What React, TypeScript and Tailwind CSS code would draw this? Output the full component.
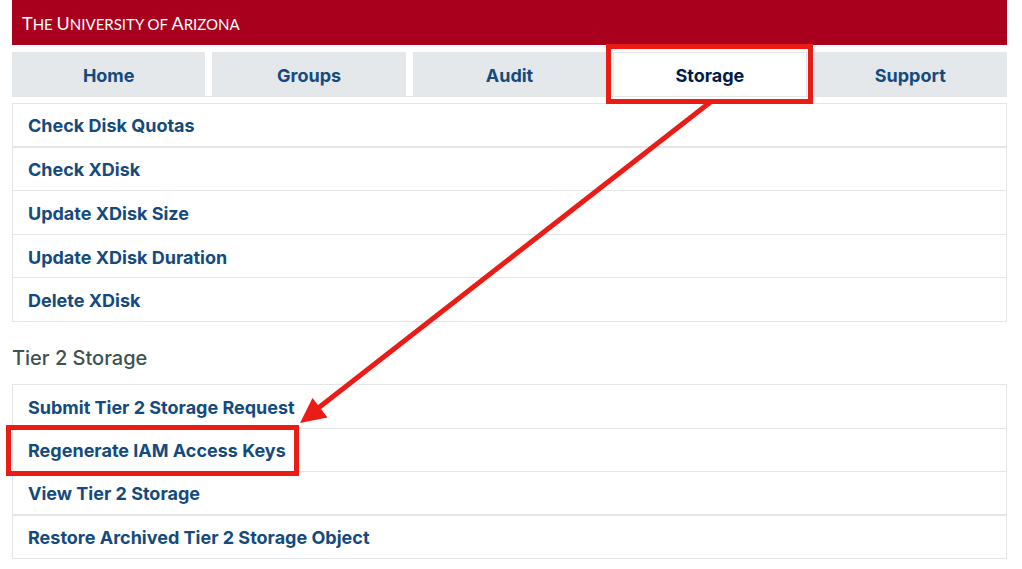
const tabs = ["Home", "Groups", "Audit", "Storage", "Support"];

const diskLinks = [
  "Check Disk Quotas",
  "Check XDisk",
  "Update XDisk Size",
  "Update XDisk Duration",
  "Delete XDisk",
];

const tierLinks = [
  "Submit Tier 2 Storage Request",
  "Regenerate IAM Access Keys",
  "View Tier 2 Storage",
  "Restore Archived Tier 2 Storage Object",
];

function Wordmark() {
  return (
    <a
      href="#home"
      className="font-['Lato',sans-serif] text-[15px] leading-5 font-normal text-white uppercase"
    >
      <span className="text-lg">T</span>he <span className="text-lg">U</span>niversity of{" "}
      <span className="text-lg">A</span>rizona
    </a>
  );
}

function LinkList({
  items,
  highlighted,
  className,
}: {
  items: string[];
  highlighted?: string;
  className: string;
}) {
  return (
    <ul className={`grid auto-rows-fr border-x border-b border-[#e2e6e9] ${className}`}>
      {items.map((item) => (
        <li key={item} className="flex items-center border-t border-[#e2e6e9] px-[15px] pt-0.5">
          <a href="#storage" className="relative">
            {item}
            {item === highlighted && (
              <span className="absolute -inset-y-3 right-[-13px] left-[-22px] border-[5px] border-[#eb1c16]" />
            )}
          </a>
        </li>
      ))}
    </ul>
  );
}

function Arrow() {
  return (
    <svg
      aria-hidden="true"
      className="pointer-events-none absolute inset-0 h-full w-full"
      fill="#eb1c16"
    >
      <line x1="70.2%" y1="102" x2="305" y2="409" stroke="#eb1c16" strokeWidth="5" />
      <path d="M288 423 L300.5 398 L315.5 417.5 Z" />
    </svg>
  );
}

export default function App() {
  return (
    <div className="bg-white pr-[15px] pb-2.5 pl-3 font-['Inter',sans-serif] text-lg leading-[27px] font-bold text-[#154a7d]">
      <div className="relative">
        <header className="flex h-[45px] items-center bg-[#a8001d] px-2.5">
          <Wordmark />
        </header>

        <nav className="mt-[7px] grid grid-cols-5 gap-x-[7px] border-b border-[#e2e6e9]">
          {tabs.map((tab) =>
            tab === "Storage" ? (
              <a
                key={tab}
                href="#storage"
                aria-current="page"
                className="relative flex h-11 items-center justify-center border-x border-t border-[#e2e6e9] pt-0.5 text-[#001c48]"
              >
                {tab}
                <span className="absolute -top-[9px] -right-[7px] -bottom-2 -left-2 border-[5px] border-[#eb1c16]" />
              </a>
            ) : (
              <a
                key={tab}
                href="#tab"
                className="flex h-11 items-center justify-center bg-[#e4e8eb] pt-0.5"
              >
                {tab}
              </a>
            ),
          )}
        </nav>

        <main>
          <LinkList
            items={diskLinks}
            className="mt-1.5 min-h-[219px] [&>li:first-child]:border-b"
          />
          <h2 className="mt-[22px] mb-3 text-xl leading-7 font-medium text-[#40514f]">
            Tier 2 Storage
          </h2>
          <LinkList
            items={tierLinks}
            highlighted="Regenerate IAM Access Keys"
            className="min-h-[175px] [&>li:nth-child(3)]:border-b"
          />
        </main>

        <Arrow />
      </div>
    </div>
  );
}
